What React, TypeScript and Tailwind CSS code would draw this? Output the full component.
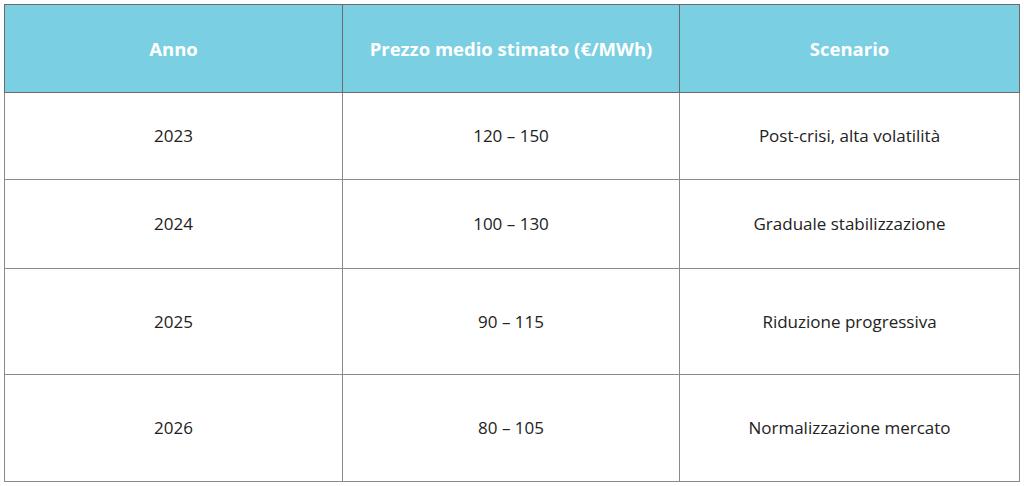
import React from "react";

const rows = [
  { y: "2023", p: "120 – 150", s: "Post-crisi, alta volatilità", h: "h-[87px]" },
  { y: "2024", p: "100 – 130", s: "Graduale stabilizzazione", h: "h-[89px]" },
  { y: "2025", p: "90 – 115", s: "Riduzione progressiva", h: "h-[106px]" },
  { y: "2026", p: "80 – 105", s: "Normalizzazione mercato", h: "h-[107px]" },
];

export default function App() {
  return (
    <div className="w-[1024px] h-[486px] bg-white pt-[4px] pl-[4px]" style={{ fontFamily: '"Open Sans", "Noto Sans", sans-serif' }}>
      <table className="border-collapse w-[1015px] table-fixed">
        <colgroup>
          <col className="w-[338px]" />
          <col className="w-[337px]" />
          <col className="w-[340px]" />
        </colgroup>
        <thead>
          <tr className="h-[88px] bg-[#7acfe3]">
            {["Anno", "Prezzo medio stimato (€/MWh)", "Scenario"].map((t) => (
              <th key={t} className="border border-[#6b6b6b] text-white font-bold text-[18.5px] text-center align-middle">
                {t}
              </th>
            ))}
          </tr>
        </thead>
        <tbody>
          {rows.map((r) => (
            <tr key={r.y} className={r.h}>
              <td className="border border-[#8a8a8a] text-center align-middle text-[17px] text-[#222]">{r.y}</td>
              <td className="border border-[#8a8a8a] text-center align-middle text-[17px] text-[#222]">{r.p}</td>
              <td className="border border-[#8a8a8a] text-center align-middle text-[17px] text-[#222]">{r.s}</td>
            </tr>
          ))}
        </tbody>
      </table>
    </div>
  );
}
